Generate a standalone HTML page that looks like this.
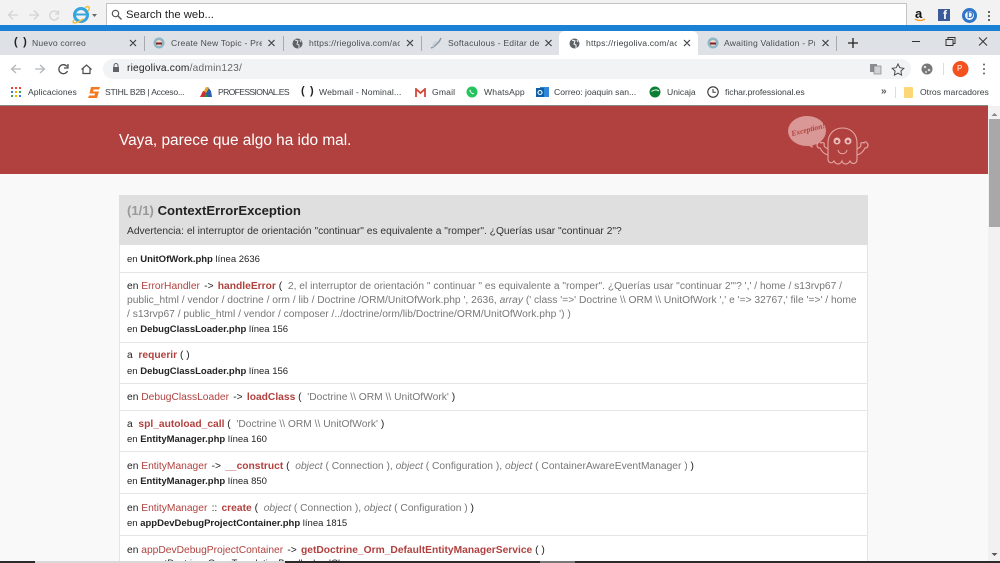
<!DOCTYPE html>
<html><head><meta charset="utf-8"><style>
html,body{margin:0;padding:0;width:1000px;height:563px;overflow:hidden;background:#fff}
body{position:relative;font-family:"Liberation Sans",sans-serif}
#w{position:absolute;left:0;top:0;width:1000px;height:563px;overflow:hidden;filter:blur(.35px)}
.a{position:absolute}
.t{position:absolute;white-space:nowrap}
.u{font-size:8.6px;color:#3c4043;letter-spacing:.2px;line-height:12px}
.tab{color:#4a4d50;top:37px}
.bm{top:86px;color:#3c4043;letter-spacing:.15px}
.sep{position:absolute;top:36px;width:1px;height:15px;background:#a8abae}
.m{position:absolute;left:127px;white-space:nowrap;font-size:10.250px;line-height:14px;color:#777}
.m i{color:#777}
.k{color:#222}
.o{color:#222;margin:0 -1.500px}
.c{color:#b0413e}
.f{color:#b0413e;font-weight:bold}
.s{position:absolute;left:127px;white-space:nowrap;font-size:9.500px;line-height:13px;color:#222}
.s b{color:#222}
.h{position:absolute;left:119px;width:749px;height:1px;background:#e6e6e6}
</style></head><body><div id="w">

<!-- top IE-style toolbar -->
<div class="a" style="left:0;top:0;width:1000px;height:25px;background:#f2f2f2"></div>
<div class="a" style="left:106px;top:3px;width:801px;height:22px;background:#fff;border:1px solid #c4c4c4;border-bottom:0;box-sizing:border-box"></div>
<svg class="a" style="left:0;top:0" width="110" height="25" fill="none">
<path d="M18 15H9M13 10.500L8.500 15 13 19.500" stroke="#d4d4d4" stroke-width="1.300"/>
<path d="M29 15H38M34 10.500L38.500 15 34 19.500" stroke="#d4d4d4" stroke-width="1.300"/>
<path d="M58 13A4.500 4.500 0 1 0 58.500 17M58.500 10.500V14H55" stroke="#d4d4d4" stroke-width="1.300"/>
<circle cx="81" cy="15" r="6.500" stroke="#35a5dd" stroke-width="3"/>
<path d="M76 14.500H86" stroke="#35a5dd" stroke-width="2"/>
<path d="M74 20C71 24 76 24 83 19M85 8C88 5 91 7 88 11" stroke="#f0c040" stroke-width="1.500"/>
<path d="M92 14h5l-2.500 3z" fill="#666"/>
</svg>
<svg class="a" style="left:110px;top:8px" width="14" height="14" fill="none"><circle cx="5.500" cy="5.500" r="3.200" stroke="#555" stroke-width="1.200"/><path d="M8 8l3.500 3.500" stroke="#555" stroke-width="1.300"/></svg>
<div class="t" style="left:126px;top:8px;font-size:11.300px;line-height:14px;color:#222">Search the web...</div>
<div class="t" style="left:915px;top:6px;font:bold 13px 'Liberation Sans',sans-serif;color:#111">a</div>
<svg class="a" style="left:914px;top:18px" width="12" height="4" fill="none"><path d="M1 1C4 3 8 3 11 1" stroke="#f39a1f" stroke-width="1.300"/></svg>
<div class="a" style="left:938px;top:9px;width:12px;height:12px;background:#3b5a98"></div>
<div class="t" style="left:943px;top:9px;font:bold 12px 'Liberation Sans',sans-serif;color:#fff;line-height:13px">f</div>
<div class="a" style="left:962px;top:8px;width:9px;height:9px;border:3px solid #2f75c8;border-radius:50%"></div>
<div class="t" style="left:967px;top:10px;font:bold 9px 'Liberation Sans',sans-serif;color:#2f75c8;line-height:11px">D</div>
<div class="a" style="left:988px;top:11px;width:2px;height:2px;background:#666;box-shadow:0 4px 0 #666,0 8px 0 #666"></div>
<div class="a" style="left:0;top:25px;width:1000px;height:6px;background:#1a81d4"></div>

<!-- Chrome tab strip -->
<div class="a" style="left:0;top:31px;width:1000px;height:24px;background:#dee1e6"></div>
<div class="a" style="left:559px;top:31px;width:139px;height:25px;background:#fff;border-radius:6px 6px 0 0"></div>

<div class="t u" style="left:14px;top:36px;font-weight:bold;font-size:11px;word-spacing:2px;color:#222">( )</div>
<div class="t u tab" style="left:32px">Nuevo correo</div>
<div class="sep" style="left:144px"></div>
<svg class="a" style="left:153px;top:37px" width="12" height="12"><circle cx="6" cy="6" r="5.500" fill="#8fb6c4"/><circle cx="6" cy="6" r="3" fill="#f4d9cc"/><path d="M3 5.500h6v2H3z" fill="#7a2020"/></svg>
<div class="t u tab" style="left:171px;width:91px;overflow:hidden">Create New Topic - Pres</div>
<div class="sep" style="left:283px"></div>
<svg class="a" style="left:292px;top:38px" width="11" height="11"><circle cx="5.500" cy="5.500" r="5" fill="#5f6368"/><path d="M3 2l3 1-1 3 2 1 0 3M8 2l1 2" stroke="#dee1e6" stroke-width="1" fill="none"/></svg>
<div class="t u tab" style="left:309px;width:91px;overflow:hidden">https://riegoliva.com/ac</div>
<div class="sep" style="left:421px"></div>
<svg class="a" style="left:430px;top:37px" width="12" height="12" fill="none"><path d="M1 11C4 10 9 6 11 1" stroke="#8b98a6" stroke-width="1.500"/><path d="M3 10C3 7 5 5 7 5" stroke="#c5ccd3" stroke-width="1.500"/></svg>
<div class="t u tab" style="left:448px;width:92px;overflow:hidden">Softaculous - Editar det</div>
<svg class="a" style="left:569px;top:38px" width="11" height="11"><circle cx="5.500" cy="5.500" r="5" fill="#5f6368"/><path d="M3 2l3 1-1 3 2 1 0 3M8 2l1 2" stroke="#fff" stroke-width="1" fill="none"/></svg>
<div class="t u tab" style="left:586px;width:91px;overflow:hidden;color:#3c4043">https://riegoliva.com/ac</div>
<svg class="a" style="left:707px;top:37px" width="12" height="12"><circle cx="6" cy="6" r="5.500" fill="#8fb6c4"/><circle cx="6" cy="6" r="3" fill="#f4d9cc"/><path d="M3 5.500h6v2H3z" fill="#7a2020"/></svg>
<div class="t u tab" style="left:724px;width:91px;overflow:hidden">Awaiting Validation - Pr</div>
<div class="sep" style="left:836px"></div>
<svg class="a" style="left:0;top:0" width="1000" height="60" fill="none" stroke="#3c4043" stroke-width="1.200">
<path d="M130 40l6 6M136 40l-6 6M268.500 40l6 6M274.500 40l-6 6M407 40l6 6M413 40l-6 6M545.500 40l6 6M551.500 40l-6 6M684 40l6 6M690 40l-6 6M822.500 40l6 6M828.500 40l-6 6"/>
<path d="M848 43h10M853 38v10" stroke="#222" stroke-width="1.300"/>
<path d="M912 41.500h8" stroke="#333" stroke-width="1"/>
<path d="M946 39.500h7v6h-7zM948 39.500v-2h7v6h-2" stroke="#333" stroke-width="1"/>
<path d="M979 37.500l8 8M987 37.500l-8 8" stroke="#333" stroke-width="1"/>
</svg>

<!-- address bar row -->
<div class="a" style="left:0;top:55px;width:1000px;height:28px;background:#fff"></div>
<div class="a" style="left:103px;top:59px;width:808px;height:20px;border-radius:10px;background:#f1f3f4"></div>
<svg class="a" style="left:0;top:55px" width="120" height="28" fill="none">
<path d="M21 14H12M16 10l-4.500 4 4.500 4" stroke="#b4b7ba" stroke-width="1.300"/>
<path d="M35 14h9M40 10l4.500 4-4.500 4" stroke="#b4b7ba" stroke-width="1.300"/>
<path d="M67 11.500A4.500 4.500 0 1 0 67.500 16M68 9v4h-4" stroke="#4a4d50" stroke-width="1.300"/>
<path d="M81.500 14.500L86.500 10l5 4.500M83 13.500V18.500H90V13.500" stroke="#4a4d50" stroke-width="1.200"/>
<rect x="113" y="12" width="6" height="5" fill="#5f6368"/>
<path d="M114 12v-1.500a2 2 0 0 1 4 0V12" stroke="#5f6368"/>
</svg>
<div class="t" style="left:127px;top:62px;font-size:10.200px;line-height:14px;letter-spacing:.2px;color:#222">riegoliva.com<span style="color:#666">/admin123/</span></div>
<svg class="a" style="left:865px;top:58px" width="125" height="22" fill="none">
<rect x="5" y="6" width="7" height="8" fill="#8a8d90"/><rect x="9" y="8" width="7" height="8" fill="#d0d2d4" stroke="#777" stroke-width=".6"/>
<path d="M33 6l1.800 3.700 4 .6-2.900 2.800.7 4-3.600-1.900-3.600 1.900.7-4-2.900-2.800 4-.6z" stroke="#4a4d50" stroke-width="1"/>
<circle cx="62" cy="11" r="5.500" fill="#777"/><circle cx="60" cy="9" r="1.300" fill="#ddd"/><circle cx="64" cy="12" r="1.300" fill="#ddd"/><circle cx="61" cy="14" r="1" fill="#ddd"/>
<path d="M78.500 5v12" stroke="#dcdcdc"/>
<circle cx="95.500" cy="11" r="8" fill="#f4511e"/>
<circle cx="119" cy="6.500" r="1" fill="#5f6368"/><circle cx="119" cy="11" r="1" fill="#5f6368"/><circle cx="119" cy="15.500" r="1" fill="#5f6368"/>
</svg>
<div class="t" style="left:957px;top:63px;font-size:8px;line-height:12px;color:#fff">P</div>

<!-- bookmarks -->
<div class="a" style="left:0;top:83px;width:1000px;height:23px;background:#fff"></div>
<svg class="a" style="left:11px;top:87px" width="10" height="10">
<g fill="#e94235"><rect x="0" y="0" width="2" height="2"/><rect x="4" y="0" width="2" height="2"/></g><rect x="8" y="0" width="2" height="2" fill="#e94235"/>
<rect x="0" y="4" width="2" height="2" fill="#3b78e7"/><rect x="4" y="4" width="2" height="2" fill="#f4b400"/><rect x="8" y="4" width="2" height="2" fill="#34a853"/>
<rect x="0" y="8" width="2" height="2" fill="#34a853"/><rect x="4" y="8" width="2" height="2" fill="#f4b400"/><rect x="8" y="8" width="2" height="2" fill="#3b78e7"/>
</svg>
<div class="t u bm" style="left:28px;letter-spacing:.05px">Aplicaciones</div>
<svg class="a" style="left:88px;top:87px" width="12" height="11"><path d="M3 0h9l-1 2.500H5.500L5 4.500h6L9 11H0l1-2.500h5.500l.5-2H1.500z" fill="#f37a20"/></svg>
<div class="t u bm" style="left:105px;letter-spacing:-.25px">STIHL B2B | Acceso...</div>
<svg class="a" style="left:200px;top:86px" width="13" height="12"><path d="M0 11L3 5h3l1 6z" fill="#d62e2e"/><path d="M6 11L5 3l3-2 3 4 1 6z" fill="#2b5fae"/><path d="M4 5l2-4 3 1-3 5z" fill="#e8a22a"/><path d="M4 11l2-4 2 4z" fill="#2a8c4a"/></svg>
<div class="t u bm" style="left:218px;letter-spacing:-.65px">PROFESSIONAL.ES</div>
<div class="t u bm" style="left:301px;top:85px;font-weight:bold;font-size:11px;color:#222;word-spacing:2px">( )</div>
<div class="t u bm" style="left:319px">Webmail - Nominal...</div>
<svg class="a" style="left:415px;top:88px" width="11" height="9" fill="none"><path d="M1 9V1l4.500 4L10 1v8" stroke="#d64638" stroke-width="1.800"/></svg>
<div class="t u bm" style="left:432px">Gmail</div>
<svg class="a" style="left:466px;top:86px" width="12" height="12"><circle cx="6" cy="6" r="5.500" fill="#25c35d"/><path d="M4 3.500c-.8.800-.5 2 .8 3.400s2.600 1.800 3.400 1l-1.200-1.200-.8.400-1.600-1.600.4-.8z" fill="#fff"/></svg>
<div class="t u bm" style="left:484px">WhatsApp</div>
<svg class="a" style="left:536px;top:86px" width="13" height="12"><rect x="4" y="1" width="9" height="10" fill="#2f87d8"/><rect x="0" y="2" width="8" height="9" fill="#0f5fa8"/><circle cx="4" cy="6.500" r="2" fill="none" stroke="#fff" stroke-width="1.100"/></svg>
<div class="t u bm" style="left:554px;letter-spacing:0">Correo: joaquin san...</div>
<svg class="a" style="left:649px;top:86px" width="12" height="12"><circle cx="6" cy="6" r="5.500" fill="#0b8035"/><path d="M2.500 5.500C5 3.500 8 3.500 10 5" stroke="#fff" fill="none"/></svg>
<div class="t u bm" style="left:667px;letter-spacing:0">Unicaja</div>
<svg class="a" style="left:707px;top:86px" width="12" height="12" fill="none"><circle cx="6" cy="6" r="5.200" stroke="#333" stroke-width="1.100"/><path d="M6 3v3.300h2.800" stroke="#333"/></svg>
<div class="t u bm" style="left:725px;letter-spacing:-.05px">fichar.professional.es</div>
<div class="t" style="left:881px;top:85px;font-size:10px;line-height:13px;color:#555;font-weight:bold">»</div>
<div class="a" style="left:895px;top:87px;width:1px;height:11px;background:#dadce0"></div>
<div class="a" style="left:904px;top:87px;width:9px;height:11px;background:#fbd775;border-radius:1px"></div>
<div class="t u bm" style="left:920px;letter-spacing:0">Otros marcadores</div>

<!-- page -->
<div class="a" style="left:0;top:106px;width:988px;height:457px;background:#f9f9f9"></div>
<div class="a" style="left:0;top:105px;width:988px;height:1px;background:#888"></div>
<div class="a" style="left:0;top:106px;width:988px;height:68px;background:#b0413e"></div>
<div class="t" style="left:119px;top:132px;font-size:15.400px;line-height:18px;color:#fff">Vaya, parece que algo ha ido mal.</div>

<!-- ghost -->
<svg class="a" style="left:785px;top:112px" width="90" height="60" fill="none" stroke="#e3a7a5" stroke-width="1.100">
<ellipse cx="22" cy="19" rx="19" ry="15" fill="#d99795" stroke="none"/>
<path d="M20 32l8 4 -2-8z" fill="#d99795" stroke="none"/>
<path d="M43 47V31C43 22 49 16 57.500 16S72 22 72 31V47C72 52 67 53 65 49C63 53 58 53 57 49C55 53 51 53 49 49C47 52 43 51 43 47Z"/>
<circle cx="52" cy="29" r="3.500" fill="#e9bdbb" stroke="none"/><circle cx="63" cy="29" r="3.500" fill="#e9bdbb" stroke="none"/>
<circle cx="52" cy="29.500" r="1.500" fill="#b0413e" stroke="none"/><circle cx="63" cy="29.500" r="1.500" fill="#b0413e" stroke="none"/>
<path d="M53 38C54 43 61 43 62 38"/>
<path d="M43 43C38 42 36 38 35 36C32 36 31 33 33 31C34 29 36 30 36 31C38 30 40 31 39 33C39 35 41 36 43 37"/>
<path d="M72 43C77 42 79 38 80 36C83 36 84 33 82 31C81 29 79 30 79 31C77 30 75 31 76 33C76 35 74 36 72 37"/>
</svg>
<div class="t" style="left:791px;top:125px;font:italic bold 7.600px 'Liberation Serif',serif;color:#b0413e;transform:rotate(-14deg);line-height:10px">Exception!</div>

<!-- panel -->
<div class="a" style="left:119px;top:195px;width:749px;height:368px;background:#fff;border-right:1px solid #e4e4e4;border-left:1px solid #e4e4e4;box-sizing:border-box"></div>
<div class="a" style="left:119px;top:195px;width:749px;height:50px;background:#dfdfdf"></div>
<div class="t" style="left:127px;top:203px;font-size:13.100px;line-height:16px;font-weight:bold;color:#222"><span style="color:#999">(1/1)</span> ContextErrorException</div>
<div class="t" style="left:127px;top:225px;font-size:10.250px;line-height:14px;color:#333">Advertencia: el interruptor de orientación "continuar" es equivalente a "romper". ¿Querías usar "continuar 2"?</div>

<div class="s" style="top:253px">en <b>UnitOfWork.php</b> línea 2636</div>
<div class="h" style="top:272px"></div>

<div class="m" style="top:280px"><span class="k">en</span> <span class="c">ErrorHandler</span> <span class="o">&nbsp;-&gt;&nbsp;</span> <span class="f">handleError</span> <span class="k">(</span>&nbsp; 2, el interruptor de orientación " continuar " es equivalente a "romper". ¿Querías usar "continuar 2"'? ',' / home / s13rvp67 /</div>
<div class="m" style="top:294px">public_html / vendor / doctrine / orm / lib / Doctrine /ORM/UnitOfWork.php ', 2636, <i>array</i> (' class '=&gt;' Doctrine \\ ORM \\ UnitOfWork ',' e '=&gt; 32767,' file '=&gt;' / home</div>
<div class="m" style="top:308px">/ s13rvp67 / public_html / vendor / composer /../doctrine/orm/lib/Doctrine/ORM/UnitOfWork.php ') )</div>
<div class="s" style="top:323px">en <b>DebugClassLoader.php</b> línea 156</div>
<div class="h" style="top:342px"></div>

<div class="m" style="top:349px"><span class="k">a</span> &nbsp;<span class="f">requerir</span> <span class="k">( )</span></div>
<div class="s" style="top:365px">en <b>DebugClassLoader.php</b> línea 156</div>
<div class="h" style="top:383px"></div>

<div class="m" style="top:391px"><span class="k">en</span> <span class="c">DebugClassLoader</span> <span class="o">&nbsp;-&gt;&nbsp;</span> <span class="f">loadClass</span> <span class="k">(</span>&nbsp; 'Doctrine \\ ORM \\ UnitOfWork' <span class="k">)</span></div>
<div class="h" style="top:410px"></div>

<div class="m" style="top:418px"><span class="k">a</span> &nbsp;<span class="f">spl_autoload_call</span> <span class="k">(</span>&nbsp; 'Doctrine \\ ORM \\ UnitOfWork' <span class="k">)</span></div>
<div class="s" style="top:433px">en <b>EntityManager.php</b> línea 160</div>
<div class="h" style="top:451px"></div>

<div class="m" style="top:460px"><span class="k">en</span> <span class="c">EntityManager</span> <span class="o">&nbsp;-&gt;&nbsp;</span> <span class="f">__construct</span> <span class="k">(</span>&nbsp; <i>object</i> ( Connection ), <i>object</i> ( Configuration ), <i>object</i> ( ContainerAwareEventManager ) <span class="k">)</span></div>
<div class="s" style="top:475px">en <b>EntityManager.php</b> línea 850</div>
<div class="h" style="top:493px"></div>

<div class="m" style="top:502px"><span class="k">en</span> <span class="c">EntityManager</span> <span class="o">&nbsp;::&nbsp;</span> <span class="f">create</span> <span class="k">(</span>&nbsp; <i>object</i> ( Connection ), <i>object</i> ( Configuration ) <span class="k">)</span></div>
<div class="s" style="top:517px">en <b>appDevDebugProjectContainer.php</b> línea 1815</div>
<div class="h" style="top:535px"></div>

<div class="m" style="top:544px"><span class="k">en</span> <span class="c">appDevDebugProjectContainer</span> <span class="o">&nbsp;-&gt;&nbsp;</span> <span class="f">getDoctrine_Orm_DefaultEntityManagerService</span> <span class="k">( )</span></div>
<div class="s" style="top:557px;left:154px">getDoctrine_Orm_TranslationBundle_loadClass</div>

<!-- scrollbar -->
<div class="a" style="left:988px;top:106px;width:12px;height:457px;background:#f1f1f1"></div>
<div class="a" style="left:989px;top:119px;width:11px;height:108px;background:#a8a8a8"></div>
<svg class="a" style="left:988px;top:106px" width="12" height="457"><path d="M3.500 10L6.500 7 9.500 10z" fill="#888"/><path d="M3.500 447L6.500 450 9.500 447z" fill="#555"/></svg>

<!-- bottom edge -->
<div class="a" style="left:0;top:561px;width:1000px;height:2px;background:#2b2b2b"></div>
<div class="a" style="left:35px;top:561px;width:250px;height:2px;background:#d8d8d8"></div>
<div class="a" style="left:540px;top:561px;width:35px;height:2px;background:#777"></div>
</div></body></html>
